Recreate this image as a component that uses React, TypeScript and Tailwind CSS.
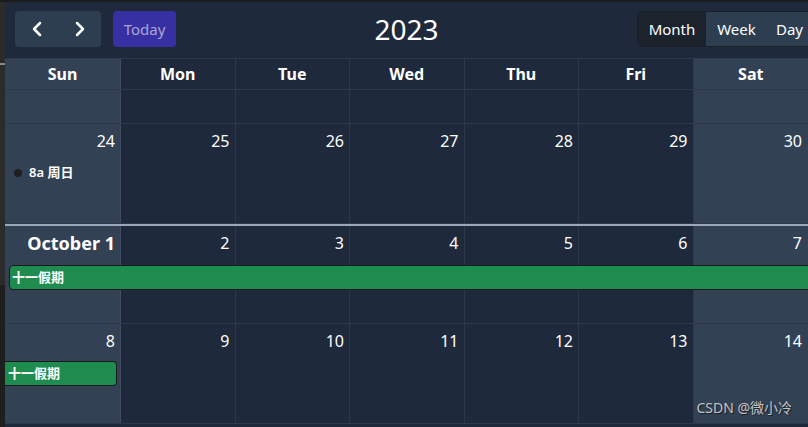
import React from "react";
import { ChevronLeft, ChevronRight } from "lucide-react";

const FONT = { fontFamily: '"Noto Sans", "Noto Sans CJK SC", sans-serif' };

const colStart = ["col-start-1", "col-start-2", "col-start-3", "col-start-4", "col-start-5", "col-start-6", "col-start-7"];
const days = ["Sun", "Mon", "Tue", "Wed", "Thu", "Fri", "Sat"];

function Bg({ i, rows }: { i: number; rows: string }) {
  const weekend = i === 0 || i === 6;
  return (
    <div
      className={`${colStart[i]} row-start-1 ${rows} ${weekend ? "bg-[#334155]" : ""} ${i < 6 ? "border-r border-[#ffffff12]" : ""}`}
    />
  );
}

function Week({
  nums,
  topBorder,
  children,
}: {
  nums: (string | number)[];
  topBorder?: boolean;
  children?: React.ReactNode;
}) {
  return (
    <div
      className={`grid grid-cols-[116px_repeat(6,1fr)] grid-rows-[34px_28px_1fr] h-[100px] border-b border-[#ffffff12] ${
        topBorder ? "border-t-2 border-t-[#9ca8ba]" : ""
      }`}
    >
      {nums.map((_, i) => (
        <Bg key={"bg" + i} i={i} rows="row-span-3" />
      ))}
      {nums.map((n, i) => (
        <div
          key={"n" + i}
          className={`${colStart[i]} row-start-1 pr-[6px] pt-[5px] text-right leading-[24px] text-white ${
            typeof n === "string" ? "text-[18px] font-bold" : "text-[16px]"
          }`}
        >
          {n}
        </div>
      ))}
      {children}
    </div>
  );
}

export default function App() {
  return (
    <div className="w-[808px] h-[427px] overflow-hidden bg-[#1e293b] flex flex-col relative" style={FONT}>
      <div className="h-[2px] bg-[#1b1b1b] shrink-0" />
      <div className="flex flex-1 min-h-0">
        <div className="w-[5px] shrink-0 flex flex-col">
          <div className="h-[61px] bg-[#2b2b2b]" />
          <div className="h-[2px] bg-[#8a8a8a]" />
          <div className="h-[220px] bg-[#2b2b2b]" />
          <div className="flex-1 bg-[#1e1e1e]" />
        </div>
        <div className="flex-1 min-w-0 flex flex-col">
          {/* toolbar */}
          <div className="grid grid-cols-[1fr_auto_1fr] items-center h-[56px] pt-[9px] pb-[11px]">
            <div className="flex items-center pl-[10px] gap-[12px]">
              <div className="flex h-[36px] w-[86px] rounded-[4px] bg-[#2c3e50] text-white">
                <div className="flex-1 flex items-center justify-center">
                  <ChevronLeft size={24} strokeWidth={2.5} />
                </div>
                <div className="flex-1 flex items-center justify-center">
                  <ChevronRight size={24} strokeWidth={2.5} />
                </div>
              </div>
              <div className="h-[36px] w-[63px] rounded-[4px] bg-[#3730a3] flex items-center justify-center text-[15px] text-[#a9a6d3]">
                Today
              </div>
            </div>
            <div className="text-[28px] text-white leading-none">2023</div>
            <div className="flex justify-end mr-[-6px]">
              <div className="flex h-[36px] rounded-[4px] overflow-hidden border border-[#18202a] text-white text-[15px]">
                <div className="w-[68px] bg-[#1c232d] flex items-center justify-center">Month</div>
                <div className="w-[61px] bg-[#2c3e50] flex items-center justify-center">Week</div>
                <div className="w-[46px] bg-[#2c3e50] flex items-center justify-start pl-[9px]">Day</div>
              </div>
            </div>
          </div>

          {/* header */}
          <div className="grid grid-cols-[116px_repeat(6,1fr)] h-[32px] border-t border-b border-[#ffffff12] shrink-0">
            {days.map((d, i) => (
              <div
                key={d}
                className={`flex items-center justify-center text-[16px] font-bold text-white ${
                  i === 0 || i === 6 ? "bg-[#334155]" : ""
                } ${i < 6 ? "border-r border-[#ffffff12]" : ""}`}
              >
                {d}
              </div>
            ))}
          </div>

          {/* partial row */}
          <div className="grid grid-cols-[116px_repeat(6,1fr)] h-[34px] border-b border-[#ffffff12] shrink-0">
            {days.map((d, i) => (
              <div
                key={d}
                className={`${i === 0 || i === 6 ? "bg-[#334155]" : ""} ${i < 6 ? "border-r border-[#ffffff12]" : ""}`}
              />
            ))}
          </div>

          <Week nums={[24, 25, 26, 27, 28, 29, 30]}>
            <div className="col-start-1 row-start-2 flex items-center pl-[9px] pt-[2px] gap-[7px]">
              <span className="w-[8px] h-[8px] rounded-full bg-[#1f1f22] shrink-0" />
              <span className="text-[13px] font-semibold text-white">8a 周日</span>
            </div>
          </Week>

          <Week nums={["October 1", 2, 3, 4, 5, 6, 7]} topBorder>
            <div className="col-start-1 col-span-7 row-start-2 self-start mt-[5px] ml-[4px] mr-[-4px] h-[25px] rounded-l-[4px] border border-[#161a20] bg-[#1e8c4e] flex items-center pl-[2px] text-[13px] font-semibold text-white">
              十一假期
            </div>
          </Week>

          <Week nums={[8, 9, 10, 11, 12, 13, 14]}>
            <div className="col-start-1 row-start-2 self-start mt-[3px] mr-[4px] h-[25px] rounded-r-[4px] border border-[#161a20] border-l-0 bg-[#1e8c4e] flex items-center pl-[3px] text-[13px] font-semibold text-white">
              十一假期
            </div>
          </Week>
        </div>
      </div>
      <div
        className="absolute right-[16px] bottom-[9px] text-[14px] text-[#c4c4c4]"
        style={{ ...FONT, textShadow: "1px 1px 1px rgba(0,0,0,0.6)" }}
      >
        CSDN @微小冷
      </div>
    </div>
  );
}
